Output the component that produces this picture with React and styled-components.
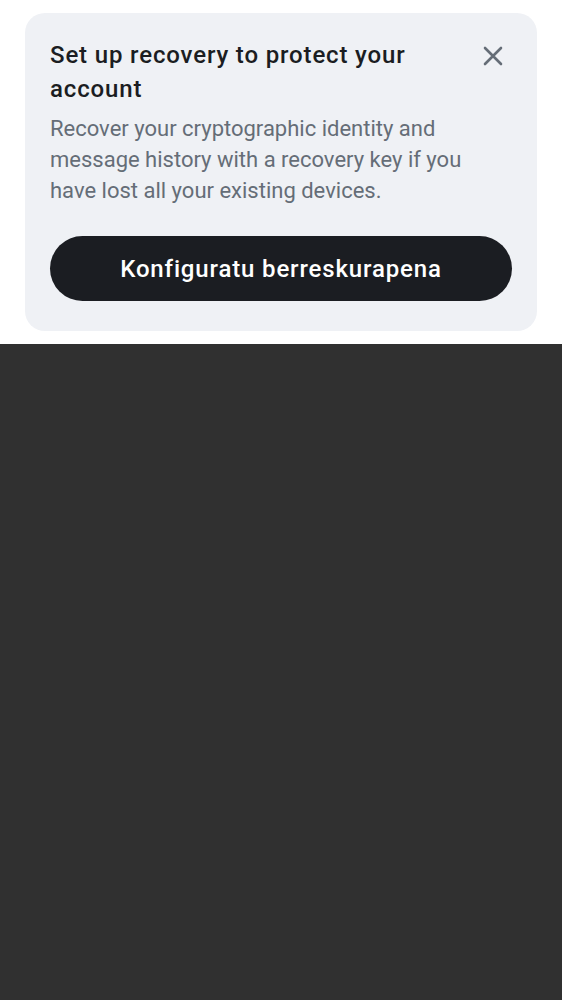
import React from "react";
import styled, { createGlobalStyle } from "styled-components";

const GlobalStyle = createGlobalStyle`
  html, body {
    margin: 0;
    padding: 0;
    background: #303030;
    font-family: Roboto, "Noto Sans", sans-serif;
  }
`;

const Page = styled.div`
  display: flex;
  flex-direction: column;
  min-height: 1000px;
`;

const Top = styled.div`
  background: #ffffff;
  padding: 13px 25px;
`;

const Card = styled.div`
  background: #eff1f5;
  border-radius: 20px;
  padding: 25px 25px 30px;
  display: flex;
  flex-direction: column;
`;

const Header = styled.div`
  display: flex;
  align-items: flex-start;
  justify-content: space-between;
  gap: 16px;
`;

const Title = styled.h2`
  margin: 0;
  font-size: 24px;
  line-height: 34px;
  font-weight: 500;
  letter-spacing: 0.85px;
  color: #1b1d22;
`;

const CloseButton = styled.button`
  flex: none;
  border: none;
  background: none;
  padding: 0;
  margin: 7px 8px 0 0;
  width: 22px;
  height: 22px;
  display: flex;
  align-items: center;
  justify-content: center;
  color: #656d77;
  cursor: pointer;
`;

const Body = styled.p`
  margin: 7px 0 0;
  font-size: 22px;
  line-height: 31px;
  color: #656d77;
`;

const Action = styled.button`
  margin-top: 30px;
  height: 65px;
  border: none;
  border-radius: 33px;
  background: #1b1d22;
  color: #ffffff;
  font-family: Roboto, "Noto Sans", sans-serif;
  font-size: 24px;
  font-weight: 500;
  letter-spacing: 0.85px;
  cursor: pointer;
`;

const Dark = styled.div`
  flex: 1;
  background: #303030;
`;

export default function App() {
  return (
    <Page>
      <GlobalStyle />
      <Top>
        <Card>
          <Header>
            <Title>Set up recovery to protect your account</Title>
            <CloseButton aria-label="Close">
              <svg width="20" height="20" viewBox="0 0 20 20">
                <path
                  d="M2 2L18 18M18 2L2 18"
                  stroke="currentColor"
                  strokeWidth="2.6"
                  strokeLinecap="round"
                />
              </svg>
            </CloseButton>
          </Header>
          <Body>
            Recover your cryptographic identity and message history with a
            recovery key if you have lost all your existing devices.
          </Body>
          <Action>Konfiguratu berreskurapena</Action>
        </Card>
      </Top>
      <Dark />
    </Page>
  );
}
